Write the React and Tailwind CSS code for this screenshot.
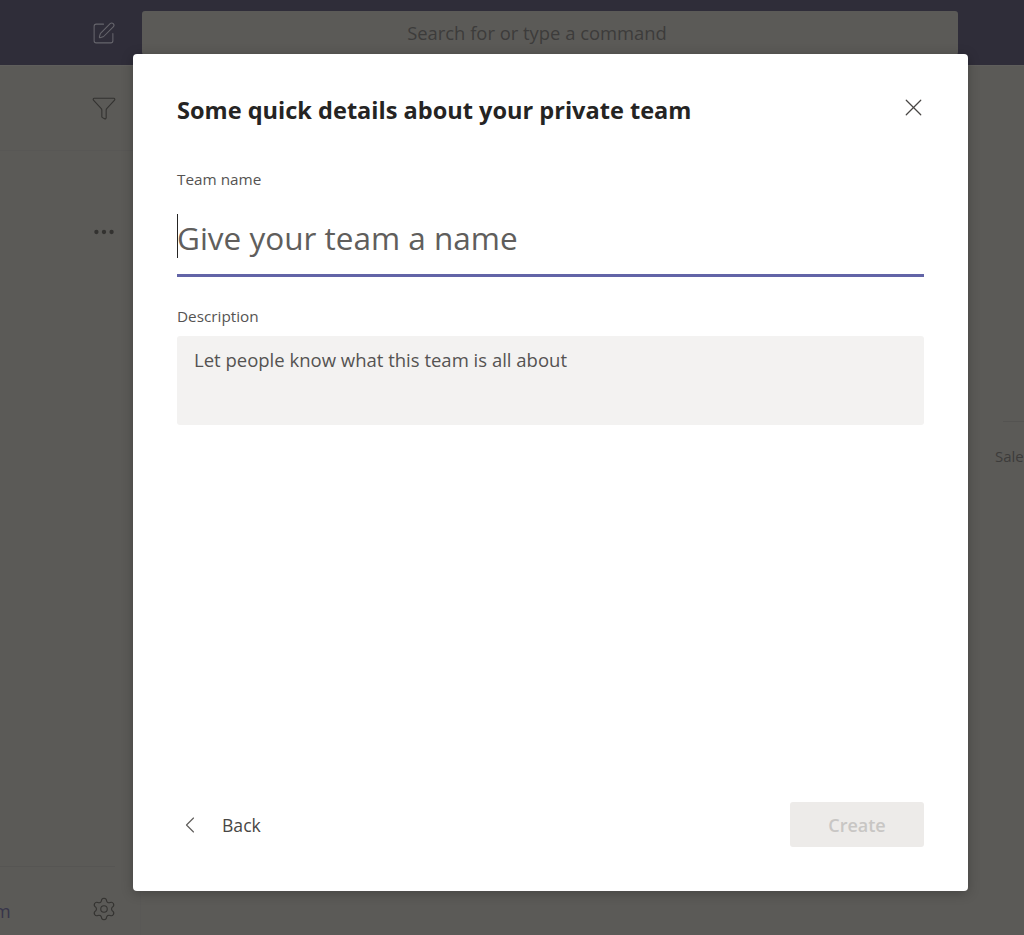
import { ChevronLeft, Ellipsis, Funnel, Settings, SquarePen, X } from "lucide-react";

const font = { fontFamily: '"Open Sans", "Noto Sans", sans-serif' };

function Background() {
  return (
    <div className="flex h-[935px] w-[1024px] flex-col overflow-hidden bg-[#5b5a57]">
      <header className="flex h-[66px] shrink-0 items-start border-b border-[#5f5e5c] bg-[#2f2d39]">
        <div className="flex w-[142px] shrink-0 justify-end pr-[26px] pt-[21px]">
          <SquarePen size={25} strokeWidth={1} className="text-[#66656c]" />
        </div>
        <div className="mt-[11px] flex h-[44px] w-[816px] items-center justify-center rounded-[3px] bg-[#5b5a57] pr-[26px] text-[18.4px] text-[#3d3c3b]">
          Search for or type a command
        </div>
      </header>
      <div className="flex flex-1">
        <aside className="flex w-[141px] shrink-0 flex-col border-r border-[#595856]">
          <div className="flex h-[85px] shrink-0 justify-end border-b border-[#585755] pr-[23px] pt-[29px]">
            <Funnel size={26} strokeWidth={1} className="text-[#333230]" />
          </div>
          <div className="flex h-[161px] shrink-0 justify-end pr-[23px] pt-[68px]">
            <Ellipsis size={26} strokeWidth={2} className="text-[#333230]" />
          </div>
          <div className="mt-auto mr-[25px] flex h-[69px] items-start justify-between border-t border-[#565553] pt-[29px]">
            <span className="-ml-[6px] mt-[2px] text-[18px] leading-[26px] text-[#37354a]">m</span>
            <Settings size={26} strokeWidth={1} className="-mr-[2px] text-[#333230]" />
          </div>
        </aside>
        <main className="flex flex-1 justify-end">
          <div className="mt-[355px] w-[29px]">
            <div className="mb-[23px] ml-[8px] h-px bg-[#545351]" />
            <span className="block whitespace-nowrap text-[15px] text-[#3d3c3b]">Sale</span>
          </div>
        </main>
      </div>
    </div>
  );
}

export default function App() {
  return (
    <div className="relative h-[935px] w-[1024px] overflow-hidden" style={font}>
      <Background />
      <div className="absolute left-[133px] top-[54px] flex h-[837px] w-[835px] flex-col rounded-[4px] bg-white px-[44px] pb-[44px] pt-[37px] shadow-[0_2px_12px_rgba(0,0,0,0.25)]">
        <div className="flex items-start justify-between">
          <h1 className="text-[23.55px] font-bold leading-[38px] text-[#252423]">
            Some quick details about your private team
          </h1>
          <button className="-mr-[4px] mt-[2px] text-[#484644]">
            <X size={29} strokeWidth={1} />
          </button>
        </div>
        <label className="mt-[40px] text-[15.3px] leading-[20px] text-[#555352]">Team name</label>
        <div className="relative mt-[25px] flex h-[63px] items-start border-b-[3px] border-[#6264a7]">
          <span className="absolute left-0 top-0 h-[44px] w-px bg-[#252423]" />
          <span className="-mt-[1px] text-[31.5px] leading-[50px] text-[#605e5c]">Give your team a name</span>
        </div>
        <label className="mt-[29px] text-[15.3px] leading-[20px] text-[#555352]">Description</label>
        <div className="mt-[10px] h-[89px] rounded-[3px] bg-[#f3f2f1] px-[17px] pt-[12px] text-[18.5px] leading-[24px] text-[#555352]">
          Let people know what this team is all about
        </div>
        <div className="mt-auto flex items-center justify-between">
          <button className="flex items-center pt-[1px] text-[17.6px] text-[#484644]">
            <ChevronLeft size={28} strokeWidth={1} className="-ml-[1px] mr-[18px] text-[#605e5c]" />
            Back
          </button>
          <button className="flex h-[45px] w-[134px] items-center justify-center rounded-[3px] bg-[#edebe9] pt-[1px] text-[18px] font-semibold text-[#c8c6c4]">
            Create
          </button>
        </div>
      </div>
    </div>
  );
}
